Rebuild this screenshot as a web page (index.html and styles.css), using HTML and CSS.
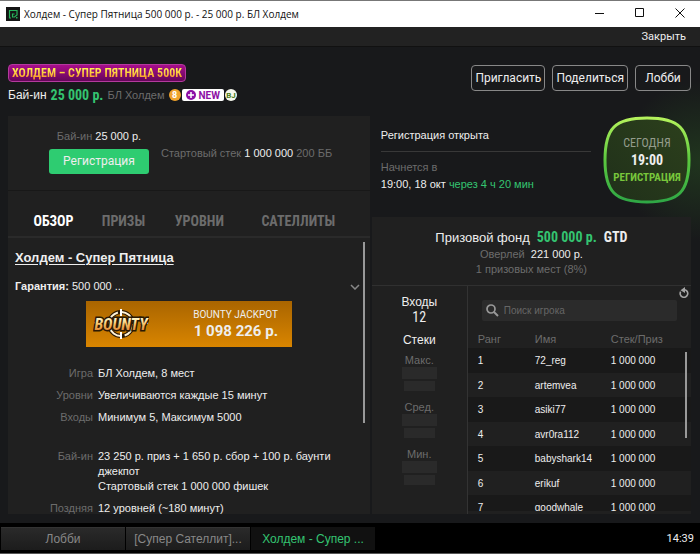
FILE: index.html
```html
<!DOCTYPE html>
<html lang="ru">
<head>
    <meta charset="UTF-8">
    <meta name="viewport" content="width=device-width, initial-scale=1.0">
    <title>Холдем - Супер Пятница</title>
    <link rel="stylesheet" href="styles.css">
</head>
<body>
    <div class="window">
        <div class="titlebar">
            <svg class="app-icon" width="14" height="14" viewBox="0 0 14 14">
                <rect width="14" height="14" fill="#151515"/>
                <path d="M5 11H3.500V3.500h7.500v4.500L8.500 10H6.500V7h2" fill="none" stroke="#27b35c" stroke-width="1.200"/>
                <rect x="10" y="10" width="1.500" height="1.500" fill="#27b35c"/>
            </svg>
            <span class="window-title">Холдем - Супер Пятница 500 000 р. - 25 000 р. БЛ Холдем</span>
            <button class="window-btn" aria-label="Свернуть">
                <svg width="10" height="10" viewBox="0 0 10 10"><path d="M0 5.500h9"/></svg>
            </button>
            <button class="window-btn" aria-label="Развернуть">
                <svg width="10" height="10" viewBox="0 0 10 10"><path d="M.5.5h8v8h-8z"/></svg>
            </button>
            <button class="window-btn" aria-label="Закрыть окно">
                <svg width="10" height="10" viewBox="0 0 10 10"><path d="M.5.5l9 9M9.500.5l-9 9"/></svg>
            </button>
        </div>

        <div class="menubar">
            <button class="menu-close">Закрыть</button>
        </div>

        <header class="header">
            <div class="header-info">
                <h1 class="event-badge"><span>ХОЛДЕМ – СУПЕР ПЯТНИЦА 500К</span></h1>
                <div class="buyin-line">
                    <span>Бай-ин</span>
                    <strong>25 000 р.</strong>
                    <span class="muted">БЛ Холдем</span>
                    <span class="tags">
                        <span class="tag tag-eight">8</span>
                        <span class="tag tag-new">
                            <svg width="10" height="10" viewBox="0 0 10 10">
                                <circle cx="5" cy="5" r="5" fill="#8d0fa5"/>
                                <path d="M5 2v6M2 5h6" stroke="#fff" stroke-width="1.500"/>
                            </svg>
                            NEW
                        </span>
                        <span class="tag tag-bj">BJ</span>
                    </span>
                </div>
            </div>
            <div class="header-actions">
                <button class="outline-btn">Пригласить</button>
                <button class="outline-btn">Поделиться</button>
                <button class="outline-btn">Лобби</button>
            </div>
        </header>

        <main class="content">
            <section class="left">
                <div class="register">
                    <div class="register-buy">
                        <div><span class="muted">Бай-ин</span> 25 000 р.</div>
                        <button class="register-btn">Регистрация</button>
                    </div>
                    <div class="register-stack"><span class="muted">Стартовый стек</span> 1 000 000 <span class="muted">200 ББ</span></div>
                </div>

                <nav class="tabs">
                    <button class="tab active">ОБЗОР</button>
                    <button class="tab">ПРИЗЫ</button>
                    <button class="tab">УРОВНИ</button>
                    <button class="tab">САТЕЛЛИТЫ</button>
                </nav>

                <div class="overview">
                    <h2>Холдем - Супер Пятница</h2>
                    <div class="guarantee">
                        <span><b>Гарантия:</b> 500 000 ...</span>
                        <svg width="10" height="6" viewBox="0 0 10 6"><path d="M1 1l4 4 4-4" fill="none" stroke="#888" stroke-width="1.500"/></svg>
                    </div>
                    <div class="jackpot">
                        <svg class="bounty" width="56" height="32" viewBox="0 0 56 32">
                            <circle cx="28" cy="16" r="12" fill="none" stroke="#2b1903" stroke-width="4"/>
                            <circle cx="28" cy="16" r="12" fill="none" stroke="#fff3d9" stroke-width="2" stroke-dasharray="15 4"/>
                            <path d="M28 1v7M28 24v7M1 15h8M47 15h8" stroke="#fff" stroke-width="2"/>
                            <text class="bounty-text" x="28" y="22" text-anchor="middle">BOUNTY</text>
                            <defs>
                                <linearGradient id="bountyFill" x1="0" y1="0" x2="0" y2="1">
                                    <stop offset="0.200" stop-color="#fff6c6"/>
                                    <stop offset="0.500" stop-color="#f2bd61"/>
                                    <stop offset="0.900" stop-color="#e0792c"/>
                                </linearGradient>
                            </defs>
                        </svg>
                        <div class="jackpot-text">
                            <div>BOUNTY JACKPOT</div>
                            <strong>1 098 226 р.</strong>
                        </div>
                    </div>
                    <dl class="details">
                        <dt>Игра</dt>
                        <dd>БЛ Холдем, 8 мест</dd>
                        <dt>Уровни</dt>
                        <dd>Увеличиваются каждые 15 минут</dd>
                        <dt>Входы</dt>
                        <dd>Минимум 5, Максимум 5000</dd>
                        <dt class="spaced">Бай-ин</dt>
                        <dd class="spaced">23 250 р. приз + 1 650 р. сбор + 100 р. баунти джекпот<br>Стартовый стек 1 000 000 фишек</dd>
                        <dt>Поздняя</dt>
                        <dd>12 уровней (~180 минут)</dd>
                    </dl>
                    <div class="scroll-thumb"></div>
                </div>
            </section>

            <section class="right">
                <div class="status">
                    <div class="status-text">
                        <div class="status-open">Регистрация открыта</div>
                        <div class="muted">Начнется в</div>
                        <div>19:00, 18 окт <span class="green">через 4 ч 20 мин</span></div>
                    </div>
                    <div class="clock">
                        <svg class="clock-frame" viewBox="0 0 88 88">
                            <defs>
                                <linearGradient id="frameStroke" x1="0" y1="0" x2="0" y2="1">
                                    <stop offset="0" stop-color="#b4f25c"/>
                                    <stop offset="0.500" stop-color="#5bc83f"/>
                                    <stop offset="1" stop-color="#2fa745"/>
                                </linearGradient>
                                <linearGradient id="frameFill" x1="0" y1="1" x2="1" y2="0">
                                    <stop offset="0" stop-color="#20301a"/>
                                    <stop offset="1" stop-color="#2c401c"/>
                                </linearGradient>
                            </defs>
                            <path d="M44 2C76 2 86 12 86 44S76 86 44 86 2 76 2 44 12 2 44 2z" fill="url(#frameFill)" stroke="url(#frameStroke)" stroke-width="3"/>
                        </svg>
                        <span class="clock-day">СЕГОДНЯ</span>
                        <strong class="clock-time">19:00</strong>
                        <span class="clock-state">РЕГИСТРАЦИЯ</span>
                    </div>
                </div>

                <div class="panel">
                    <div class="prize">
                        <div class="prize-fund">
                            <span>Призовой фонд</span>
                            <strong class="green">500 000 р.</strong>
                            <strong>GTD</strong>
                        </div>
                        <div><span class="muted">Оверлей</span>&nbsp; 221 000 р.</div>
                        <div class="muted">1 призовых мест (8%)</div>
                    </div>

                    <div class="field">
                        <div class="stacks">
                            <div class="entries">Входы<b>12</b></div>
                            <div class="stacks-title">Стеки</div>
                            <div class="stack"><span>Макс.</span><i></i><i class="small"></i></div>
                            <div class="stack"><span>Сред.</span><i></i><i class="small"></i></div>
                            <div class="stack"><span>Мин.</span><i></i><i class="small"></i></div>
                        </div>

                        <div class="players">
                            <button class="refresh" aria-label="Обновить">
                                <svg width="10" height="12" viewBox="0 0 10 12">
                                    <path d="M3 3.200A3.800 3.800 0 1 0 7.500 3.600" fill="none" stroke="#a5a5a5" stroke-width="1.600" transform="rotate(-30 5 6.500)"/>
                                    <path d="M1.500 3.200L6 0v6z" fill="#a5a5a5"/>
                                </svg>
                            </button>
                            <label class="search">
                                <svg width="13" height="13" viewBox="0 0 13 13">
                                    <circle cx="5" cy="5" r="4" fill="none" stroke="#999" stroke-width="1.700"/>
                                    <path d="M8 8l4 4" stroke="#999" stroke-width="2"/>
                                </svg>
                                <input type="text" placeholder="Поиск игрока" aria-label="Поиск игрока">
                            </label>
                            <div class="table-wrap">
                                <table>
                                    <thead>
                                        <tr><th class="rank">Ранг</th><th class="name">Имя</th><th>Стек/Приз</th></tr>
                                    </thead>
                                    <tbody>
                                        <tr><td>1</td><td>72_reg</td><td>1 000 000</td></tr>
                                        <tr><td>2</td><td>artemvea</td><td>1 000 000</td></tr>
                                        <tr><td>3</td><td>asiki77</td><td>1 000 000</td></tr>
                                        <tr><td>4</td><td>avr0ra112</td><td>1 000 000</td></tr>
                                        <tr><td>5</td><td>babyshark14</td><td>1 000 000</td></tr>
                                        <tr><td>6</td><td>erikuf</td><td>1 000 000</td></tr>
                                        <tr><td>7</td><td>goodwhale</td><td>1 000 000</td></tr>
                                    </tbody>
                                </table>
                                <div class="scroll-thumb"></div>
                            </div>
                        </div>
                    </div>
                </div>
            </section>
        </main>

        <footer class="taskbar">
            <button class="task">Лобби</button>
            <button class="task">[Супер Сателлит]...</button>
            <button class="task current">Холдем - Супер ...</button>
            <time>14:39</time>
        </footer>
    </div>
</body>
</html>
```
FILE: styles.css
```css
* {
    box-sizing: border-box;
    margin: 0;
    padding: 0;
}
body {
    font-family: 'Liberation Sans', Arial, sans-serif;
    font-size: 11px;
    line-height: 15px;
    color: #eee;
    background-color: #18191b;
}
button {
    font: inherit;
    color: inherit;
    background: none;
    border: none;
    cursor: pointer;
    white-space: nowrap;
}
.muted {
    color: #6c6c6c;
}
.green {
    color: #34c471;
}
.window {
    display: flex;
    flex-direction: column;
    height: 100vh;
    border-top: 1px solid #777;
    border-bottom: 1px solid #555;
    background: radial-gradient(circle at 100% 160px, #20351e 0, #18191b 80px);
}

/* Title bar and menu */
.titlebar {
    display: flex;
    align-items: center;
    height: 26px;
    padding-left: 6px;
    background-color: #fff;
    color: #111;
}
.window-title {
    flex: 1;
    margin-left: 4px;
    font-family: 'Open Sans', 'Noto Sans', sans-serif;
    font-size: 10px;
}
.window-btn {
    width: 40px;
    height: 26px;
}
.window-btn svg {
    fill: none;
    stroke: #111;
}
.menubar {
    display: flex;
    justify-content: flex-end;
    height: 20px;
    padding-right: 14px;
    background-color: #222;
    border-bottom: 1px solid #111;
}
.menu-close {
    font-family: Roboto, sans-serif;
    font-size: 11px;
}

/* Tournament header */
.header {
    display: flex;
    justify-content: space-between;
    height: 69px;
    padding: 17px 9px 0 8px;
}
.event-badge {
    width: max-content;
    height: 18px;
    padding: 0 3px;
    border: 1px solid #b33b9d;
    border-radius: 4px;
    background: linear-gradient(#a80d8c, #65065a);
    font-family: 'Roboto Condensed', 'Liberation Sans Narrow', Roboto, sans-serif;
    font-size: 12px;
    line-height: 16px;
}
.event-badge span {
    background: linear-gradient(#fff04e 25%, #f99a2b 85%);
    background-clip: text;
    -webkit-background-clip: text;
    color: transparent;
}
.buyin-line {
    display: flex;
    align-items: center;
    gap: 4px;
    height: 16px;
    margin-top: 5px;
    font-size: 12px;
}
.buyin-line strong {
    font-family: 'Roboto Condensed', 'Liberation Sans Narrow', Roboto, sans-serif;
    font-size: 14px;
    color: #34c471;
}
.buyin-line .muted {
    font-size: 11px;
}
.tags {
    display: flex;
    gap: 1px;
}
.tag {
    display: flex;
    align-items: center;
    justify-content: center;
    height: 12px;
    min-width: 12px;
    border-radius: 6px;
    font-family: Roboto, sans-serif;
    font-weight: bold;
    font-size: 9px;
}
.tag-eight {
    background-color: #f0a32c;
    color: #fff;
}
.tag-new {
    gap: 3px;
    padding: 0 4px;
    border-radius: 2px;
    background-color: #fff;
    color: #8d0fa5;
    font-size: 10px;
}
.tag-bj {
    background-color: #f6f8ee;
    color: #4e7c17;
    font-size: 8px;
}
.header-actions {
    display: flex;
    align-items: flex-start;
    gap: 7px;
}
.outline-btn {
    height: 26px;
    margin-top: 1px;
    min-width: 56px;
    padding: 0 3px;
    border: 1px solid #888;
    border-radius: 4px;
    font-family: Roboto, sans-serif;
    font-size: 12px;
}

/* Main columns */
.content {
    flex: 1;
    display: grid;
    grid-template-columns: 17fr 15fr;
    gap: 2px;
    min-height: 0;
    padding: 0 9px 9px 8px;
}
.left, .right {
    display: flex;
    flex-direction: column;
    min-width: 0;
    min-height: 0;
}
.register {
    display: flex;
    gap: 12px;
    height: 75px;
    padding: 13px 0 0 41px;
    background-color: #202020;
    border-bottom: 1px solid #181818;
}
.register-buy {
    width: 100px;
    text-align: center;
}
.register-btn {
    width: 100%;
    height: 25px;
    margin-top: 5px;
    border-radius: 3px;
    background-color: #2ecc71;
    font-family: Roboto, sans-serif;
    font-size: 12px;
}
.register-stack {
    margin-top: 17px;
}
.tabs {
    display: grid;
    grid-template-columns: 71fr 69fr 83fr 115fr;
    height: 47px;
    padding: 14px 14px 0 10px;
    background-color: #202020;
    border-bottom: 2px solid #2a2a2a;
}
.tab {
    height: 32px;
    font-family: 'Roboto Condensed', 'Liberation Sans Narrow', Roboto, sans-serif;
    font-weight: bold;
    font-size: 14px;
    color: #6c6c6c;
}
.tab.active {
    color: #fff;
}
.overview {
    flex: 1;
    position: relative;
    min-height: 0;
    padding: 12px 10px 0 7px;
    background-color: #202020;
    overflow: hidden;
}
.overview h2 {
    font-size: 13px;
    line-height: 16px;
    text-decoration: underline;
    text-underline-offset: 2px;
}
.guarantee {
    display: flex;
    align-items: center;
    justify-content: space-between;
    margin-top: 13px;
}
.jackpot {
    display: flex;
    align-items: center;
    justify-content: space-between;
    width: 206px;
    height: 46px;
    margin: 7px auto 0 71px;
    padding: 0 14px 0 7px;
    background: linear-gradient(#a96500, #d98500);
    font-family: Roboto, sans-serif;
}
.bounty-text {
    font-family: 'Roboto Condensed', 'Liberation Sans Narrow', Roboto, sans-serif;
    font-weight: bold;
    font-style: italic;
    font-size: 16px;
    fill: url(#bountyFill);
    stroke: #2b1903;
    stroke-width: 3px;
    paint-order: stroke;
}
.jackpot-text {
    font-size: 10px;
    text-align: right;
}
.jackpot-text strong {
    font-size: 15px;
    line-height: 19px;
}
.details {
    display: grid;
    grid-template-columns: 78px 1fr;
    gap: 7px 5px;
    margin-top: 19px;
    padding-right: 24px;
}
.details dt {
    text-align: right;
    color: #6c6c6c;
}
.details .spaced {
    margin-top: 17px;
}
.scroll-thumb {
    position: absolute;
    top: 4px;
    right: 5px;
    width: 2px;
    height: 181px;
    background-color: #999;
}

/* Start status */
.status {
    display: flex;
    justify-content: space-between;
    height: 101px;
    padding-left: 9px;
}
.status-text {
    flex: 1;
    margin-right: 12px;
    padding-top: 12px;
}
.status-open {
    height: 24px;
    margin-bottom: 8px;
    border-bottom: 1px solid #383838;
}
.status-text .muted {
    margin-bottom: 2px;
}
.clock {
    position: relative;
    display: flex;
    flex-direction: column;
    align-items: center;
    width: 88px;
    height: 88px;
    padding-top: 19px;
    font-family: 'Roboto Condensed', 'Liberation Sans Narrow', Roboto, sans-serif;
    line-height: 17px;
}
.clock-frame {
    position: absolute;
    inset: 0;
}
.clock span, .clock strong {
    position: relative;
}
.clock-day {
    font-size: 12px;
    color: #949c8d;
}
.clock-time {
    font-size: 14px;
}
.clock-state {
    font-size: 11px;
    font-weight: bold;
    color: #78c63b;
}

/* Prize pool and players */
.panel {
    flex: 1;
    display: flex;
    flex-direction: column;
    min-height: 0;
    background-color: #202020;
}
.prize {
    height: 69px;
    padding-top: 11px;
    border-bottom: 1px solid #303030;
    text-align: center;
}
.prize-fund {
    display: flex;
    justify-content: center;
    align-items: center;
    gap: 7px;
    height: 19px;
    font-size: 13px;
}
.prize-fund strong {
    font-family: 'Roboto Condensed', 'Liberation Sans Narrow', Roboto, sans-serif;
    font-size: 14px;
}
.field {
    flex: 1;
    display: flex;
    min-height: 0;
}
.stacks {
    width: 96px;
    padding-top: 9px;
    border-right: 1px solid #333;
    text-align: center;
}
.entries, .stacks-title {
    font-size: 12px;
}
.entries b {
    display: block;
    font-family: 'Roboto Condensed', 'Liberation Sans Narrow', Roboto, sans-serif;
    font-size: 14px;
    font-weight: normal;
}
.stacks-title {
    margin: 8px 0 5px;
}
.stack {
    display: flex;
    flex-direction: column;
    align-items: center;
    height: 47px;
    font-size: 11px;
    color: #6c6c6c;
}
.stack i {
    width: 35px;
    height: 12px;
    margin-bottom: 2px;
    background-color: #2a2a2a;
}
.stack span {
    height: 14px;
}
.stack .small {
    width: 31px;
    height: 10px;
}
.players {
    flex: 1;
    display: flex;
    flex-direction: column;
    position: relative;
    min-width: 0;
    padding: 14px 0 3px;
}
.refresh {
    position: absolute;
    top: 1px;
    right: 2px;
    height: 14px;
}
.search {
    display: flex;
    align-items: center;
    gap: 5px;
    height: 21px;
    margin: 0 14px;
    padding-left: 4px;
    border-radius: 2px;
    background-color: #2b2b2b;
}
.search input {
    flex: 1;
    min-width: 0;
    border: none;
    outline: none;
    background: none;
    color: #eee;
    font: inherit;
    font-size: 10px;
}
.search input::placeholder {
    color: #666;
}
.table-wrap {
    flex: 1;
    position: relative;
    min-height: 0;
    margin-top: 9px;
    overflow: hidden;
}
table {
    width: 100%;
    border-collapse: collapse;
    table-layout: fixed;
    font-size: 10px;
}
th {
    height: 18px;
    padding-left: 10px;
    font-size: 11px;
    font-weight: normal;
    text-align: left;
    color: #6c6c6c;
}
th.rank {
    width: 57px;
}
th.name {
    width: 76px;
}
td {
    height: 24px;
    padding-left: 10px;
}
tbody tr:nth-child(odd) {
    background-color: #191919;
}
tbody tr:nth-child(odd) td {
    height: 25px;
}
.table-wrap .scroll-thumb {
    top: 22px;
    right: 4px;
    height: 86px;
}

/* Task bar */
.taskbar {
    display: flex;
    align-items: center;
    gap: 1px;
    height: 30px;
    padding: 1px 6px 0 1px;
    background-color: #000;
}
.task {
    width: 124px;
    height: 23px;
    border-top: 1px solid #333;
    background: linear-gradient(#2a2a2a, #1c1c1c);
    color: #888;
    font-size: 12px;
}
.task.current {
    border-color: #111;
    background: #111;
    color: #34c471;
}
.taskbar time {
    margin-left: auto;
    font-family: Roboto, sans-serif;
    font-size: 11px;
}
```
